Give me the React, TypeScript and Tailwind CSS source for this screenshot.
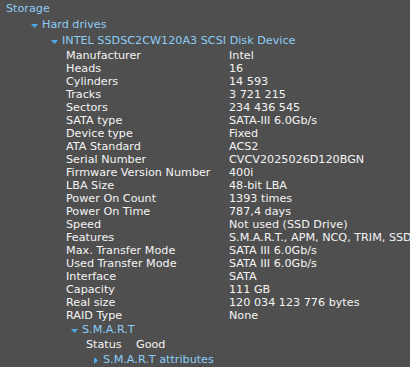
import React from "react";

const rows: [string, string][] = [
	["Manufacturer", "Intel"],
	["Heads", "16"],
	["Cylinders", "14 593"],
	["Tracks", "3 721 215"],
	["Sectors", "234 436 545"],
	["SATA type", "SATA-III 6.0Gb/s"],
	["Device type", "Fixed"],
	["ATA Standard", "ACS2"],
	["Serial Number", "CVCV2025026D120BGN"],
	["Firmware Version Number", "400i"],
	["LBA Size", "48-bit LBA"],
	["Power On Count", "1393 times"],
	["Power On Time", "787,4 days"],
	["Speed", "Not used (SSD Drive)"],
	["Features", "S.M.A.R.T., APM, NCQ, TRIM, SSD"],
	["Max. Transfer Mode", "SATA III 6.0Gb/s"],
	["Used Transfer Mode", "SATA III 6.0Gb/s"],
	["Interface", "SATA"],
	["Capacity", "111 GB"],
	["Real size", "120 034 123 776 bytes"],
	["RAID Type", "None"],
];

function Arrow({ open = true }: { open?: boolean }) {
	return (
		<svg width="7" height="7" viewBox="0 0 7 7" className="mr-[4px] shrink-0">
			{open ? (
				<polygon points="0,2 7,2 3.5,6" fill="#4fa8e8" />
			) : (
				<polygon points="2,0 6,3.5 2,7" fill="#4fa8e8" />
			)}
		</svg>
	);
}

export default function App() {
	return (
		<div
			className="h-[367px] w-[410px] overflow-hidden whitespace-nowrap bg-[#4f4f4f] pt-[1px] text-[11.2px] text-[#f4f4f4]"
			style={{ fontFamily: '"DejaVu Sans", Verdana, sans-serif' }}
		>
			<div className="flex h-[16px] items-center pl-[6px] text-[#8ccdf5]">Storage</div>
			<div className="flex h-[16px] items-center pl-[31px] text-[#8ccdf5]">
				<Arrow />
				Hard drives
			</div>
			<div className="flex h-[16px] items-center pl-[51px] text-[#8ccdf5]">
				<Arrow />
				INTEL SSDSC2CW120A3 SCSI Disk Device
			</div>

			{/* Properties */}
			<div className="grid grid-cols-[163px_1fr] pl-[66px]">
				{rows.map(([k, v]) => (
					<React.Fragment key={k}>
						<div className="h-[13px] leading-[13px]">{k}</div>
						<div className="h-[13px] leading-[13px]">{v}</div>
					</React.Fragment>
				))}
			</div>

			<div className="flex h-[16px] items-center pl-[71px] text-[#8ccdf5]">
				<Arrow />
				S.M.A.R.T
			</div>
			<div className="flex h-[15px] items-center pl-[86px]">
				<span className="w-[50px]">Status</span>
				<span>Good</span>
			</div>
			<div className="flex h-[15px] items-center pl-[92px] text-[#8ccdf5]">
				<Arrow open={false} />
				S.M.A.R.T attributes
			</div>
		</div>
	);
}
